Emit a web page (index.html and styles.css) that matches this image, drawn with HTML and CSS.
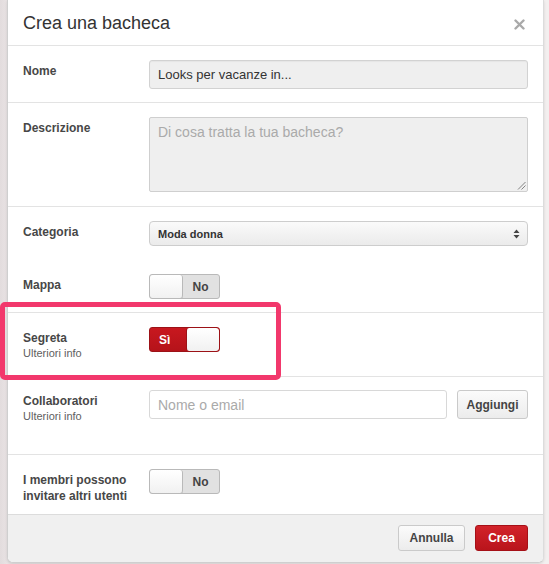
FILE: index.html
```html
<!DOCTYPE html>
<html lang="it">
<head>
<meta charset="utf-8">
<title>Crea una bacheca</title>
<link rel="stylesheet" href="styles.css">
</head>
<body>
<div class="page">
  <div class="modal">
    <div class="modal-header">
      <h1 class="title">Crea una bacheca</h1>
      <span class="close" aria-label="Chiudi">
        <svg width="11" height="11" viewBox="0 0 11 11"><path d="M1.5 1.5 L9.5 9.5 M9.5 1.5 L1.5 9.5" stroke="#a9a9a9" stroke-width="2.4" stroke-linecap="round"/></svg>
      </span>
    </div>

    <div class="row row-nome">
      <div class="label"><span class="label-main">Nome</span></div>
      <div class="field"><div class="input input-filled">Looks per vacanze in...</div></div>
    </div>

    <div class="row row-desc">
      <div class="label"><span class="label-main">Descrizione</span></div>
      <div class="field">
        <div class="textarea">
          <span class="placeholder">Di cosa tratta la tua bacheca?</span>
          <svg class="grip" width="9" height="9" viewBox="0 0 9 9"><path d="M8.5 1 L1 8.5 M8.5 4.5 L4.5 8.5" stroke="#777" stroke-width="0.9"/></svg>
        </div>
      </div>
    </div>

    <div class="row row-cat noborder">
      <div class="label"><span class="label-main">Categoria</span></div>
      <div class="field">
        <div class="select">
          <span>Moda donna</span>
          <svg width="7" height="10" viewBox="0 0 7 10"><path d="M3.5 0.5 L6.5 4 L0.5 4 Z M0.5 6 L6.5 6 L3.5 9.5 Z" fill="#444"/></svg>
        </div>
      </div>
    </div>

    <div class="row row-mappa">
      <div class="label"><span class="label-main">Mappa</span></div>
      <div class="field">
        <div class="toggle off"><span class="knob"></span><span class="tlabel">No</span></div>
      </div>
    </div>

    <div class="row row-segreta">
      <div class="label"><span class="label-main">Segreta</span><span class="label-sub">Ulteriori info</span></div>
      <div class="field">
        <div class="toggle on"><span class="tlabel">Sì</span><span class="knob"></span></div>
      </div>
    </div>

    <div class="row row-collab">
      <div class="label"><span class="label-main">Collaboratori</span><span class="label-sub">Ulteriori info</span></div>
      <div class="field field-collab">
        <div class="input input-white"><span class="placeholder">Nome o email</span></div>
        <span class="btn btn-grey btn-add">Aggiungi</span>
      </div>
    </div>

    <div class="row row-membri">
      <div class="label"><span class="label-main">I membri possono<br>invitare altri utenti</span></div>
      <div class="field">
        <div class="toggle off"><span class="knob"></span><span class="tlabel">No</span></div>
      </div>
    </div>

    <div class="footer">
      <span class="btn btn-grey btn-cancel">Annulla</span>
      <span class="btn btn-red">Crea</span>
    </div>
  </div>
  <div class="annotation"></div>
</div>
</body>
</html>
```

FILE: styles.css
```css
* { box-sizing: border-box; }

html, body {
  margin: 0;
  padding: 0;
}

body {
  background: #ebe6e7;
  font-family: "Liberation Sans", Arial, Helvetica, sans-serif;
  color: #333;
  width: 549px;
  height: 564px;
  overflow: hidden;
}

.page {
  position: relative;
  padding-left: 7px;
  height: 564px;
  background: linear-gradient(90deg, #e2dcdd 0, #e9e3e4 7px, #f3efef 544px);
}

.modal {
  width: 537px;
  background: #fff;
  border-left: 1px solid #cfcfcf;
  border-right: 1px solid #dcdcdc;
  border-bottom: 1px solid #cfcfcf;
  border-radius: 0 0 6px 6px;
  overflow: hidden;
  box-shadow: 0 1px 3px rgba(0,0,0,0.12);
}

.modal-header {
  height: 46px;
  border-bottom: 1px solid #e3e3e3;
  display: flex;
  align-items: center;
  justify-content: space-between;
  padding: 0 18px 0 15px;
}

.title {
  margin: 0;
  font-size: 18px;
  font-weight: normal;
  color: #333;
  line-height: 22px;
  padding-top: 1px;
}

.close {
  display: flex;
  align-items: center;
  padding-top: 3px;
}

.row {
  display: grid;
  grid-template-columns: 126px 1fr;
  padding: 14px 15px 13px 15px;
  border-bottom: 1px solid #e3e3e3;
}

.row.noborder { border-bottom: none; }

.row-nome { padding-bottom: 13px; }
.row-desc { padding-bottom: 14px; }
.row-cat { padding-bottom: 14px; }
.row-mappa { padding-top: 14px; padding-bottom: 13px; }
.row-segreta { padding-bottom: 16px; }
.row-collab { padding-top: 13px; padding-bottom: 31px; }
.row-membri { padding-top: 14px; padding-bottom: 10px; border-bottom: 1px solid #dcdcdc; }

.label {
  display: flex;
  flex-direction: column;
  padding-top: 3px;
}

.label-main {
  font-size: 12px;
  font-weight: bold;
  line-height: 16px;
  color: #474747;
}

.label-sub {
  font-size: 11px;
  line-height: 14px;
  color: #606060;
}

.input {
  height: 29px;
  border: 1px solid #d2d2d2;
  border-radius: 3px;
  padding: 0 8px;
  display: flex;
  align-items: center;
  font-size: 13px;
}

.input-filled {
  background: #efefef;
  color: #333;
  box-shadow: inset 0 1px 1px rgba(0,0,0,0.04);
}

.input-white {
  background: #fff;
  flex: 1;
  border-color: #d8d8d8;
}

.placeholder {
  color: #aaa;
  font-size: 14px;
}

.textarea {
  position: relative;
  height: 75px;
  background: #efefef;
  border: 1px solid #cfcfcf;
  border-radius: 2px;
  padding: 6px 8px;
  line-height: 16px;
}

.grip {
  position: absolute;
  right: 1px;
  bottom: 1px;
}

.select {
  height: 25px;
  border: 1px solid #cdcdcd;
  border-radius: 4px;
  background: linear-gradient(#fafafa, #ebebeb);
  display: flex;
  align-items: center;
  justify-content: space-between;
  padding: 0 7px 0 8px;
  font-size: 11px;
  font-weight: bold;
  color: #333;
}

.toggle {
  width: 71px;
  height: 25px;
  border-radius: 3px;
  display: flex;
  overflow: hidden;
}

.toggle .knob {
  width: 33px;
  background: linear-gradient(#ffffff, #f1f1f1);
  border-radius: 3px;
}

.toggle .tlabel {
  flex: 1;
  display: flex;
  align-items: center;
  justify-content: center;
  font-size: 12px;
  font-weight: bold;
}

.toggle.off {
  border: 1px solid #b9b9b9;
  background: #e1e1e1;
}

.toggle.off .knob {
  border-right: 1px solid #b9b9b9;
  box-shadow: 0 1px 0 rgba(0,0,0,0.15);
}

.toggle.off .tlabel {
  color: #444;
  padding-right: 1px;
}

.toggle.on {
  border: 1px solid #9c1217;
  background: linear-gradient(#c8181f, #b5131a);
}

.toggle.on .tlabel {
  color: #fff;
  justify-content: flex-start;
  padding-left: 9px;
}

.toggle.on .knob {
  border-left: 1px solid #9c1217;
}

.field-collab {
  display: flex;
  gap: 10px;
}

.btn {
  display: inline-flex;
  align-items: center;
  justify-content: center;
  font-size: 12px;
  font-weight: bold;
  border-radius: 3px;
}

.btn-grey {
  border: 1px solid #cacaca;
  background: linear-gradient(#fbfbfb, #ececec);
  color: #444;
}

.btn-add {
  width: 71px;
  height: 29px;
}

.footer {
  background: #f0f0f0;
  height: 47px;
  display: flex;
  justify-content: flex-end;
  align-items: center;
  gap: 10px;
  padding: 0 15px 1px;
}

.btn-cancel {
  width: 67px;
  height: 26px;
}

.btn-red {
  width: 53px;
  height: 26px;
  border: 1px solid #a51017;
  background: linear-gradient(#d2232a, #b9141b);
  color: #fff;
}

.annotation {
  position: absolute;
  left: 0;
  top: 302px;
  width: 281px;
  height: 78px;
  border: 5px solid #f2386c;
  border-radius: 5px;
}
```
